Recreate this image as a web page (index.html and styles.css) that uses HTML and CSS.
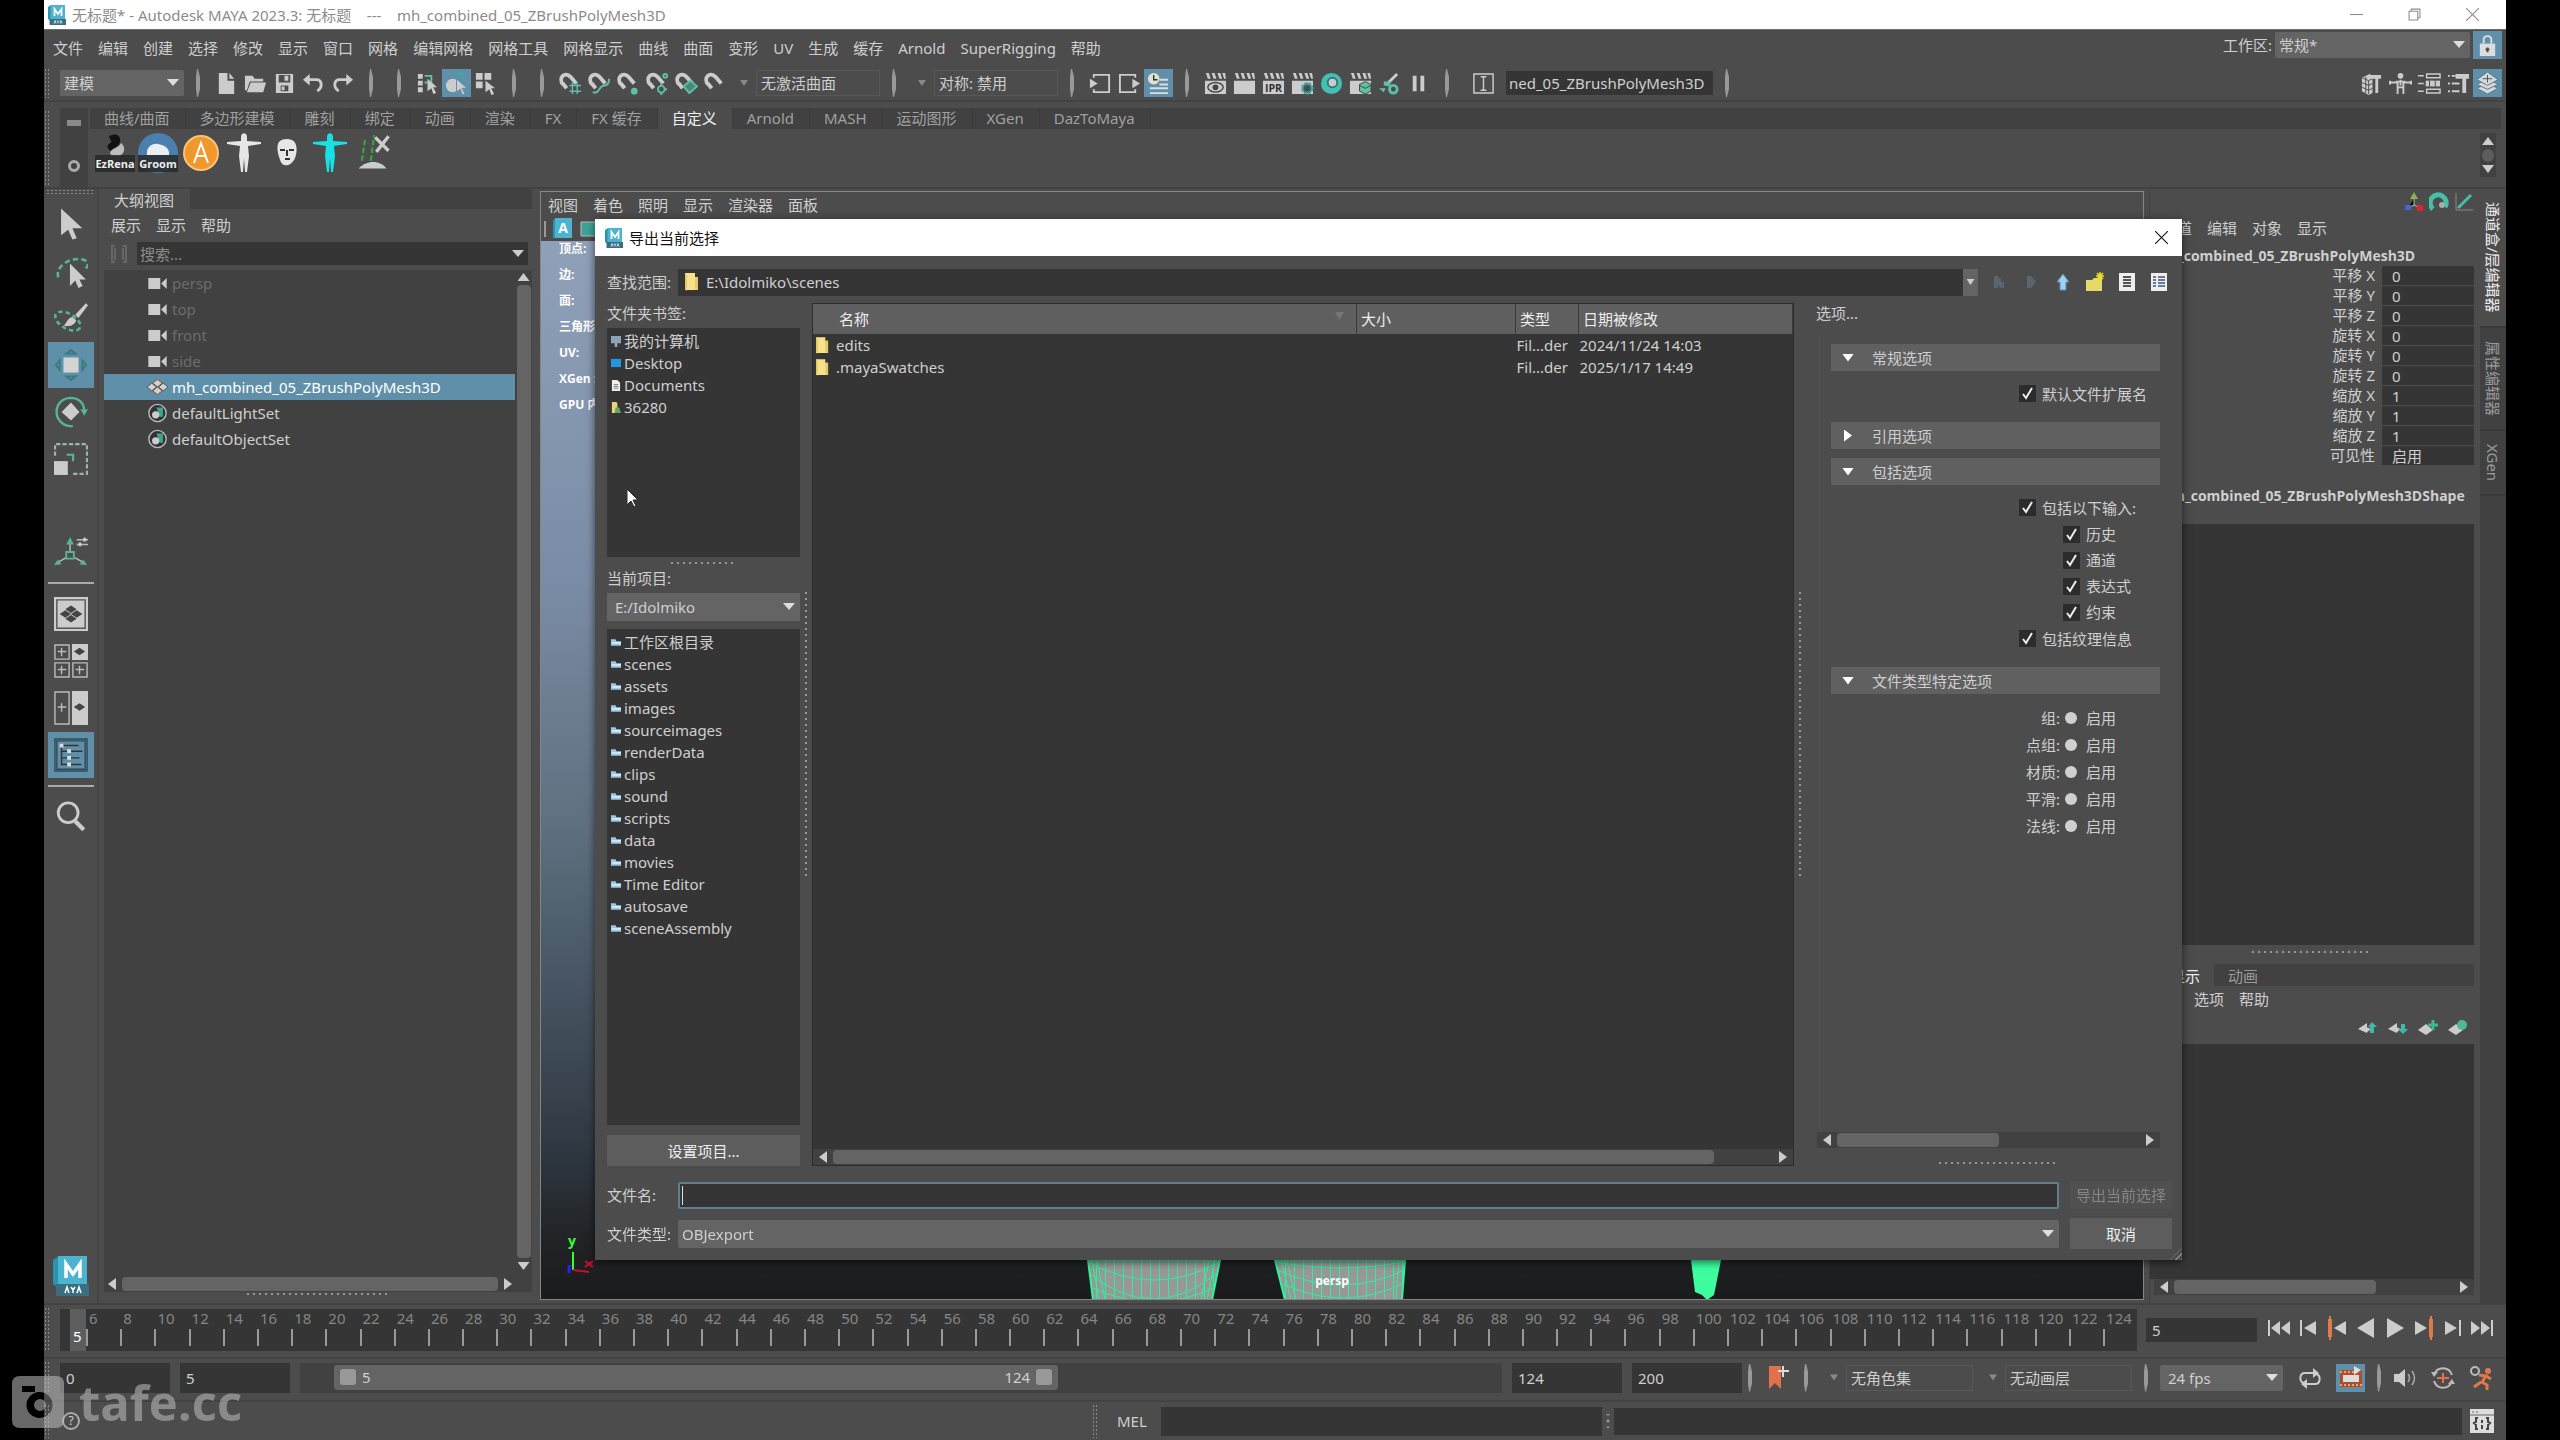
FILE: index.html
```html
<!DOCTYPE html>
<html lang="zh-CN">
<head>
  <meta charset="UTF-8" />
  <title>Autodesk MAYA 2023.3</title>
  <meta name="viewport" content="width=device-width, initial-scale=1.0" />
  <link rel="stylesheet" href="styles.css">
</head>
<body>

<!-- icon sprite -->
<svg class="sprite" xmlns="http://www.w3.org/2000/svg">
  <symbol id="i-maya" viewBox="0 0 36 40"><path fill="#2c93ad" d="M0 4 6 0v32l-6-4z"/><path fill="#4db4cf" d="M5 0h29v30H5z"/><path fill="#3a6f82" d="M3 28h33v12H3z"/><path fill="none" stroke="#fff" stroke-width="3.500" d="M13 22V8l7 10 7-10v14"/><path fill="none" stroke="#fff" stroke-width="1.500" d="m12 37 2-6 2 6M18 31l2 3 2-3M20 34v3M24 37l2-6 2 6"/></symbol>
  <symbol id="i-new" viewBox="0 0 24 24"><path fill="#ccc" d="M4 1h9v8h7v14H4z"/><path fill="#ccc" d="m15 1 5 6h-5z"/></symbol>
  <symbol id="i-open" viewBox="0 0 24 24"><path fill="#ccc" d="M1 4h8l2 3h9v3H6L3 19H1z"/><path fill="#ccc" d="M7 11h16l-3 10H3z"/></symbol>
  <symbol id="i-save" viewBox="0 0 24 24"><path fill="#ccc" fill-rule="evenodd" d="M3 2h18v20H3zM6 3v8h12V3zM8 14v6h8v-6z"/><path fill="#ccc" d="M12 4h4v5h-4zM9 15h3v4H9z"/></symbol>
  <symbol id="i-undo" viewBox="0 0 24 24"><path fill="#ccc" d="m1 8 7-6v12z"/><path d="M7 8h8c6 0 7 8 1 12" fill="none" stroke="#ccc" stroke-width="3"/></symbol>
  <symbol id="i-redo" viewBox="0 0 24 24"><path fill="#ccc" d="m23 8-7-6v12z"/><path d="M17 8H9c-6 0-7 8-1 12" fill="none" stroke="#ccc" stroke-width="3"/></symbol>
  <symbol id="i-cursor" viewBox="0 0 24 24"><path fill="#ccc" d="M5 1v19l5-4 3 7 3-1-3-7h7z"/></symbol>
  <symbol id="i-selh" viewBox="0 0 24 24"><path fill="#ccc" d="M2 2h5v5H2zM2 9h5v5H2zM2 16h5v5H2z"/><path stroke="#5fc0a5" stroke-width="2" fill="none" d="M9 4h7v8M9 11h3"/><path fill="#ccc" d="m12 7 10 9h-4l3 6-3 1-2-6-4 3z"/></symbol>
  <symbol id="i-selo" viewBox="0 0 24 24"><path fill="none" stroke="#3fa7a0" stroke-width="2" d="M10 2h9v8"/><circle cx="8" cy="14" r="7" fill="#ccc"/><path fill="#ccc" stroke="#5d8fa8" d="m12 7 11 10h-5l3 6-3 1-2-6-4 3z"/></symbol>
  <symbol id="i-selc" viewBox="0 0 24 24"><path fill="#ccc" d="M2 1h7v7H2zM11 1h7v7h-7zM2 10h7v7H2z"/><path fill="#ccc" d="m12 9 10 8h-4l3 6-3 1-2-6-4 3z"/></symbol>
  <symbol id="i-mag" viewBox="0 0 24 24"><path d="M4 13C-1 6 6-1 12 5l6 7" fill="none" stroke="#ccc" stroke-width="4"/><path d="m4 12 4 5" stroke="#ccc" stroke-width="4"/></symbol>
  <symbol id="i-mag1" viewBox="0 0 24 24"><use href="#i-mag"/><path d="M14 11v12M19 11v12M11 14h12M11 20h12" stroke="#5fc0a5" stroke-width="1.5"/></symbol>
  <symbol id="i-mag2" viewBox="0 0 24 24"><use href="#i-mag"/><path d="M5 21c7 3 6-7 12-7 4 0 5-4 5-7" fill="none" stroke="#5fc0a5" stroke-width="2"/></symbol>
  <symbol id="i-mag3" viewBox="0 0 24 24"><use href="#i-mag"/><circle cx="18" cy="20" r="3.500" fill="#5fc0a5"/></symbol>
  <symbol id="i-mag4" viewBox="0 0 24 24"><use href="#i-mag"/><g fill="none" stroke="#5fc0a5" stroke-width="2"><circle cx="16" cy="18" r="3.500"/><circle cx="20" cy="4" r="2"/><path d="M16 11v3M22 18h-2M16 22v2"/></g></symbol>
  <symbol id="i-mag5" viewBox="0 0 24 24"><use href="#i-mag"/><path fill="#4c8875" stroke="#5fc0a5" stroke-width="2" d="m16 9 7 6-8 7-6-7z"/></symbol>
  <symbol id="i-in" viewBox="0 0 24 24"><path fill="none" stroke="#ccc" stroke-width="2" d="M5 6V3h16v18H5v-3"/><path fill="#ccc" d="m1 7 8 5-8 5z"/></symbol>
  <symbol id="i-out" viewBox="0 0 24 24"><path fill="none" stroke="#ccc" stroke-width="2" d="M18 6V3H2v18h16v-3"/><path fill="#ccc" d="m15 7 8 5-8 5z"/></symbol>
  <symbol id="i-hist" viewBox="0 0 24 24"><path d="M13 8h9M13 13h9M3 17h19M3 22h19" stroke="#ddd" stroke-width="2"/><circle cx="7" cy="7" r="6" fill="#e4e0cf"/><path d="M7 3v5h4" stroke="#333" stroke-width="1.500" fill="none"/></symbol>
  <symbol id="i-clap" viewBox="0 0 24 24"><path fill="#ccc" d="M1 9h22v14H1zM2 1h3l2 6H4zM8 1h3l2 6h-3zM14 1h3l2 6h-3zM19 1h3l1 6h-2z"/></symbol>
  <symbol id="i-clap1" viewBox="0 0 24 24"><use href="#i-clap"/><ellipse cx="12" cy="16" rx="8" ry="5" fill="none" stroke="#444" stroke-width="1.500"/><circle cx="12" cy="16" r="3" fill="#444"/></symbol>
  <symbol id="i-clap2" viewBox="0 0 24 24"><use href="#i-clap"/><text x="12" y="21" text-anchor="middle" font-family="Open Sans" font-weight="700" font-size="11" fill="#333">IPR</text></symbol>
  <symbol id="i-clap3" viewBox="0 0 24 24"><use href="#i-clap"/><circle cx="17" cy="17" r="5" fill="#4c4c4c" stroke="#3aa9a4" stroke-width="3" stroke-dasharray="3 1"/></symbol>
  <symbol id="i-clap4" viewBox="0 0 24 24"><use href="#i-clap"/><path fill="#5fc0a5" stroke="#444" d="m17 10 6 3v7l-6 3-6-3v-7z"/><path stroke="#444" d="m11 14 6 3 6-3" fill="none"/></symbol>
  <symbol id="i-ball" viewBox="0 0 24 24"><circle cx="12" cy="12" r="11" fill="#45bfb2"/><circle cx="13" cy="11" r="5" fill="#ccc" stroke="#377" stroke-width="2"/></symbol>
  <symbol id="i-brushg" viewBox="0 0 24 24"><path d="m11 11 9-9" stroke="#ccc" stroke-width="3"/><path fill="#5fc0a5" d="M6 10h8l-2 5-6-1zM1 17h7l-2 4z"/><circle cx="16" cy="18" r="4" fill="none" stroke="#5fc0a5" stroke-width="3"/></symbol>
  <symbol id="i-pause" viewBox="0 0 24 24"><path fill="#ccc" d="M6 4h4v16H6zM14 4h4v16h-4z"/></symbol>
  <symbol id="i-text" viewBox="0 0 24 24"><path fill="none" stroke="#ccc" stroke-width="1.500" d="M2 2h20v20H2zM9 5h6M12 5v14M9 19h6"/></symbol>
  <symbol id="i-cube" viewBox="0 0 24 24"><path fill="#ccc" d="m2 6 8-4 3 2v18l-4 2-7-4z"/><path stroke="#4c4c4c" d="M2 11l7 3 4-2M2 16l7 3 4-2M6 5v17M9 9v14M2 6l7 3 4-2" fill="none"/><path fill="#ccc" d="M12 3h10v4h-3v15h-3V7h-4z"/></symbol>
  <symbol id="i-man" viewBox="0 0 24 24"><circle cx="12" cy="4" r="3" fill="#ccc"/><path fill="none" stroke="#ccc" stroke-width="2" d="M1 11h7v-1h8v1h7M1 9v4M23 9v4M9 10v13M15 10v13M9 16h6M12 8v6"/></symbol>
  <symbol id="i-attr" viewBox="0 0 24 24"><path fill="none" stroke="#ccc" stroke-width="1.500" d="M9 2h14v4H9zM9 18h14v4H9zM0 4h6M0 12h6M0 20h6"/><path fill="#ccc" d="M8 9h15v6H8z"/><path stroke="#444" d="M12 9v6M18 9v6"/></symbol>
  <symbol id="i-tool" viewBox="0 0 24 24"><path fill="#ccc" d="M9 2h14v5h-3v15h-4V7H9z"/><path stroke="#ccc" stroke-width="2" d="M1 4h2M5 4h4M1 12h2M5 12h8M1 20h2M5 20h8"/></symbol>
  <symbol id="i-layers" viewBox="0 0 24 24"><g fill="#d8d8d8" stroke="#55778a" stroke-width="1"><path d="m12 12 11 5-11 6-11-6z"/><path d="m12 7 11 6-11 5-11-5z"/><path d="m12 0 11 8-11 6L1 8z"/></g><path d="M12 3v8M7 7h10" stroke="#456"/></symbol>
  <symbol id="i-lock" viewBox="0 0 24 24"><path d="M8 10V6c0-5 8-5 8 0v4" fill="none" stroke="#ddd" stroke-width="2"/><path fill="#ddd" d="M4 10h16v13H4z"/><path d="M12 14v5M10 16h4" stroke="#444" stroke-width="2"/></symbol>
  <symbol id="i-lasso" viewBox="0 0 32 32"><path d="M4 22C1 11 16 3 26 5s5 8 2 11" fill="none" stroke="#55b596" stroke-width="2.500" stroke-dasharray="5 3"/><path fill="#ccc" d="M15 9v21l5-5 3 7 4-2-3-6h6z"/></symbol>
  <symbol id="i-paint" viewBox="0 0 32 32"><ellipse cx="13" cy="19" rx="13" ry="7" transform="rotate(30 13 19)" fill="none" stroke="#55b596" stroke-width="2.500" stroke-dasharray="4 3"/><path fill="#ccc" d="M9 23c3-1 3-7 8-8l4 3c-2 6-8 6-12 5zM20 13 30 2l2 2-9 12z"/></symbol>
  <symbol id="i-move" viewBox="0 0 36 36"><path fill="#d4d4d4" d="M10 10h16v16H10z"/><g fill="none" stroke="#357b82" stroke-width="2"><path d="m13 6 5-4 5 4zM13 30l5 4 5-4zM6 13l-4 5 4 5zM30 13l4 5-4 5z"/></g></symbol>
  <symbol id="i-rotate" viewBox="0 0 36 36"><path fill="none" stroke="#55b596" stroke-width="2.500" d="M17 33C-3 30-1 4 17 3c10 0 15 6 15 14M17 33h3"/><path fill="#55b596" d="M28 15h8l-4 7z"/><path fill="#ccc" d="m18 8 9 10-9 9-10-9z"/></symbol>
  <symbol id="i-scale" viewBox="0 0 32 32"><path fill="none" stroke="#9ab5ab" stroke-width="2" stroke-dasharray="4 2" d="M1 13V2h30v28H17"/><path fill="#ccc" d="M0 18h13v13H0z"/><path fill="none" stroke="#55b596" stroke-width="2" d="M12 12h6v6"/></symbol>
  <symbol id="i-manip" viewBox="0 0 36 36"><path fill="none" stroke="#bbb" d="m17 9v10M13 24 4 29M22 24l9 5M24 5h12M24 10h12" stroke-width="1.500"/><path fill="none" stroke="#55b596" stroke-width="2" d="M13 18h8v7h-8z"/><path fill="#55b596" d="m17 2 4 8h-8zM0 32l4-6 4 5zM35 32l-4-6-4 5z"/><path fill="#ccc" d="M31 3h3v4h-3zM26 8h3v4h-3z"/></symbol>
  <symbol id="i-lay1" viewBox="0 0 36 36"><path fill="#ccc" d="M0 0h36v36H0z"/><path fill="none" stroke="#555" stroke-width="1.500" d="M3 3h30v30H3z"/><path fill="#444" d="m18 9 6 4-6 4-6-4zM12 14l6 4-6 4-6-4zM24 14l6 4-6 4-6-4zM18 19l6 4-6 4-6-4z"/></symbol>
  <symbol id="i-lay4" viewBox="0 0 36 36"><path fill="#ccc" d="M19 0h17v17H19z"/><path fill="none" stroke="#bbb" stroke-width="1.500" d="M1 1h15v15H1zM1 20h15v15H1zM20 20h15v15H20zM8 4v9M4 8h9M8 23v9M4 27h9M27 23v9M23 27h9"/><path fill="#444" d="m27 4 6 4-6 4-6-4z"/></symbol>
  <symbol id="i-lay2" viewBox="0 0 36 36"><path fill="#ccc" d="M19 0h17v36H19z"/><path fill="none" stroke="#bbb" stroke-width="1.500" d="M1 1h15v34H1zM8 13v9M4 17h9"/><path fill="#444" d="m27 13 6 4-6 4-6-4z"/></symbol>
  <symbol id="i-outl" viewBox="0 0 36 36"><path fill="none" stroke="#2f4b59" stroke-width="1.500" d="M1 1h34v34H1zM3 3h30v30H3z"/><path fill="none" stroke="#333" stroke-width="1.500" d="M9 8h17M15 14h15M15 21h12M15 28h14M8 9v19h6M8 14h6M8 21h6"/><path fill="#ddd" d="M6 6h4v4H6zM14 12h4v4h-4zM14 19h4v4h-4zM14 26h4v4h-4z"/></symbol>
  <symbol id="i-find" viewBox="0 0 24 24"><circle cx="10" cy="9" r="7" fill="none" stroke="#ccc" stroke-width="2"/><path d="m15 15 6 6" stroke="#ccc" stroke-width="3"/></symbol>
  <symbol id="i-cam" viewBox="0 0 20 12"><path fill="#ccc" d="M0 0h13v12H0zM14 6l6-6v12z"/></symbol>
  <symbol id="i-mesh" viewBox="0 0 22 16"><g fill="#d8d0c8" stroke="#555"><path d="m11 0 5 4-5 4-5-4zM5 4l5 4-5 4-5-4zM17 4l5 4-5 4-5-4zM11 8l5 4-5 4-5-4z"/></g></symbol>
  <symbol id="i-set" viewBox="0 0 22 22"><circle cx="11" cy="11" r="9.500" fill="#333" stroke="#bbb" stroke-width="1.500"/><path fill="#3da58c" d="M10 5h7v10h-4z"/><circle cx="9" cy="13" r="4" fill="#ccc"/></symbol>
  <symbol id="i-folder" viewBox="0 0 14 18"><path fill="#f7e18b" d="M0 0h10v4h3v13H0z"/><path fill="#e6c965" d="M10 4h3v13l-3-1zM0 0l2 3v15l-2-2z"/></symbol>
  <symbol id="i-bfolder" viewBox="0 0 11 9"><path fill="#9cc7e2" d="M0 1h5l1 2h5v5H0z"/><path fill="#d3ebf7" d="M1 4h10v2H1z"/></symbol>
  <symbol id="i-pc" viewBox="0 0 11 12"><path fill="#8aa3b8" d="M0 0h11v8H7v4H4V8H0z"/></symbol>
  <symbol id="i-desk" viewBox="0 0 11 12"><path fill="#2494e3" d="M0 1h11v9H0z"/></symbol>
  <symbol id="i-doc" viewBox="0 0 11 12"><path fill="#eee" d="M1 0h6l3 3v9H1z"/><path stroke="#777" d="M3 5h5M3 7h5M3 9h5"/></symbol>
  <symbol id="i-user" viewBox="0 0 11 12"><path fill="#ecd07a" d="M1 0h5l1 2v10H1z"/><path fill="#5da76b" d="M5 6h4l2 6H4z"/></symbol>
  <symbol id="i-back" viewBox="0 0 20 20"><path fill="#5c656b" d="M5 4h4v12H5zM9 6h3v4h3v6h-3l-3-3z"/></symbol>
  <symbol id="i-fwd" viewBox="0 0 20 20"><path fill="#5c656b" d="M6 4h4l5 6-5 6H6z"/></symbol>
  <symbol id="i-up" viewBox="0 0 20 20"><path fill="#9fd0f2" stroke="#5d8db0" d="m10 2 6 8h-3v8H7v-8H4z"/></symbol>
  <symbol id="i-newf" viewBox="0 0 20 20"><path fill="#e6da66" d="M1 8h6l2-2h8v13H1z"/><path stroke="#e8e020" stroke-width="1.500" d="M15 0v8M11 4h8M12 1l6 6M18 1l-6 6"/></symbol>
  <symbol id="i-list" viewBox="0 0 20 20"><path fill="#eee" d="M2 1h16v18H2z"/><path stroke="#555" stroke-width="2" d="M6 5h8M6 8h8M6 11h8M6 14h8"/></symbol>
  <symbol id="i-detail" viewBox="0 0 20 20"><path fill="#eee" d="M2 1h16v18H2z"/><path stroke="#667a99" stroke-width="2" d="M4 5h3M9 5h7M4 8h3M9 8h7M4 11h3M9 11h7M4 14h3M9 14h7"/></symbol>
  <symbol id="i-tofirst" viewBox="0 0 24 24"><path fill="#ccc" d="M1 4h2v16H1zM13 5v14l-9-7zM23 5v14l-9-7z"/></symbol>
  <symbol id="i-prev" viewBox="0 0 24 24"><path fill="#ccc" d="M4 4h2v16H4zM20 5v14L8 12z"/></symbol>
  <symbol id="i-prevk" viewBox="0 0 24 24"><path fill="#e0794a" d="M3 3h4v18H3zM4 0h2v24H4z"/><path fill="#ccc" d="M21 5v14L9 12z"/></symbol>
  <symbol id="i-playb" viewBox="0 0 24 24"><path fill="#ccc" d="M20 2v20L3 12z"/></symbol>
  <symbol id="i-cut" viewBox="0 0 32 36"><path d="M3 32c7-8 20-8 25 0z" fill="#ccc"/><path d="M6 25 9 5M14 25l3-23" stroke="#3c9f48" stroke-width="2" stroke-dasharray="5 2"/><path d="m18 4 12 12M30 3 19 17" stroke="#ccc" stroke-width="3"/></symbol>
  <symbol id="i-tpose" viewBox="0 0 38 40"><path fill="currentColor" d="M16 4c0-5 6-5 6 0v4l14 1v2l-13 2 1 10-2 16h-2l-1-14-1 14h-2l-2-16 1-10-13-2V9l14-1z"/></symbol>
</svg>

<div class="app">

  <header class="titlebar">
    <svg class="logo-s"><use href="#i-maya"/></svg>
    <span class="title-text">无标题* - Autodesk MAYA 2023.3: 无标题 &nbsp;&nbsp; --- &nbsp;&nbsp; mh_combined_05_ZBrushPolyMesh3D</span>
    <div class="win-buttons">
      <button aria-label="最小化"><svg viewBox="0 0 12 12"><path d="M0 6h12"/></svg></button>
      <button aria-label="还原"><svg viewBox="0 0 12 12"><path d="M1 3h8v8H1zM3 3V1h8v8H9"/></svg></button>
      <button aria-label="关闭"><svg viewBox="0 0 12 12"><path d="m0 0 12 12M12 0 0 12"/></svg></button>
    </div>
  </header>

  <nav class="menubar">
    <a href="#">文件</a><a href="#">编辑</a><a href="#">创建</a><a href="#">选择</a><a href="#">修改</a><a href="#">显示</a><a href="#">窗口</a><a href="#">网格</a><a href="#">编辑网格</a><a href="#">网格工具</a><a href="#">网格显示</a><a href="#">曲线</a><a href="#">曲面</a><a href="#">变形</a><a href="#">UV</a><a href="#">生成</a><a href="#">缓存</a><a href="#">Arnold</a><a href="#">SuperRigging</a><a href="#">帮助</a>
    <div class="workspace">
      <label for="ws">工作区:</label>
      <select id="ws"><option>常规*</option></select>
      <button class="tb on" aria-label="锁定"><svg><use href="#i-lock"/></svg></button>
    </div>
  </nav>

  <div class="statusline">
    <i class="grip-v"></i>
    <select class="mode" aria-label="菜单集"><option>建模</option></select>
    <i class="sep"></i>
    <button class="tb"><svg><use href="#i-new"/></svg></button>
    <button class="tb"><svg><use href="#i-open"/></svg></button>
    <button class="tb"><svg><use href="#i-save"/></svg></button>
    <button class="tb"><svg><use href="#i-undo"/></svg></button>
    <button class="tb"><svg><use href="#i-redo"/></svg></button>
    <i class="sep"></i><i class="sep"></i>
    <button class="tb"><svg><use href="#i-selh"/></svg></button>
    <button class="tb on"><svg><use href="#i-selo"/></svg></button>
    <button class="tb"><svg><use href="#i-selc"/></svg></button>
    <i class="sep"></i><i class="sep"></i>
    <button class="tb"><svg><use href="#i-mag1"/></svg></button>
    <button class="tb"><svg><use href="#i-mag2"/></svg></button>
    <button class="tb"><svg><use href="#i-mag3"/></svg></button>
    <button class="tb"><svg><use href="#i-mag4"/></svg></button>
    <button class="tb"><svg><use href="#i-mag5"/></svg></button>
    <button class="tb"><svg><use href="#i-mag"/></svg></button>
    <i class="drop"></i>
    <span class="flat-field">无激活曲面</span>
    <i class="sep"></i><i class="drop"></i>
    <span class="flat-field">对称: 禁用</span>
    <i class="sep"></i>
    <button class="tb"><svg><use href="#i-in"/></svg></button>
    <button class="tb"><svg><use href="#i-out"/></svg></button>
    <button class="tb on"><svg><use href="#i-hist"/></svg></button>
    <i class="sep"></i>
    <button class="tb"><svg><use href="#i-clap1"/></svg></button>
    <button class="tb"><svg><use href="#i-clap"/></svg></button>
    <button class="tb"><svg><use href="#i-clap2"/></svg></button>
    <button class="tb"><svg><use href="#i-clap3"/></svg></button>
    <button class="tb"><svg><use href="#i-ball"/></svg></button>
    <button class="tb"><svg><use href="#i-clap4"/></svg></button>
    <button class="tb"><svg><use href="#i-brushg"/></svg></button>
    <button class="tb"><svg><use href="#i-pause"/></svg></button>
    <i class="sep"></i>
    <button class="tb wide"><svg><use href="#i-text"/></svg></button>
    <input class="name-field" aria-label="名称" value="ned_05_ZBrushPolyMesh3D">
    <i class="sep"></i>
    <div class="status-right">
      <button class="tb"><svg><use href="#i-cube"/></svg></button>
      <button class="tb"><svg><use href="#i-man"/></svg></button>
      <button class="tb"><svg><use href="#i-attr"/></svg></button>
      <button class="tb"><svg><use href="#i-tool"/></svg></button>
      <button class="tb on"><svg><use href="#i-layers"/></svg></button>
    </div>
  </div>

  <section class="shelf">
    <i class="grip-v"></i>
    <div class="shelf-side"><i class="shelf-menu"></i><i class="gear"></i></div>
    <div class="shelf-main">
      <div class="shelf-tabs">
        <a href="#">曲线/曲面</a><a href="#">多边形建模</a><a href="#">雕刻</a><a href="#">绑定</a><a href="#">动画</a><a href="#">渲染</a><a href="#">FX</a><a href="#">FX 缓存</a><a href="#" class="active">自定义</a><a href="#">Arnold</a><a href="#">MASH</a><a href="#">运动图形</a><a href="#">XGen</a><a href="#">DazToMaya</a>
      </div>
      <div class="shelf-body">
        <button class="shelf-btn"><svg viewBox="0 0 40 40"><path d="M14 3c8-4 12 0 11 6-1 5-7 5-9 9-4-2-5-5-1-8 3-1 0-3-1-7z" fill="#111"/><path d="M15 20c1-5 8-4 11-10 6 5 3 13-4 13-3 0-6 0-7-3z" fill="#bbb"/></svg><span>EzRena</span></button>
        <button class="shelf-btn"><svg viewBox="0 0 40 40"><circle cx="20" cy="20" r="20" fill="#4b7fae"/><path d="M9 22c-1-8 5-12 11-11s12 4 11 11z" fill="#e8eef2"/></svg><span>Groom</span></button>
        <button class="shelf-btn"><svg viewBox="0 0 40 40"><circle cx="20" cy="20" r="17" fill="#f0982c" stroke="#f8c37c" stroke-width="2"/><path d="m13 30 7-20 7 20M16 23h8" fill="none" stroke="#fff" stroke-width="2"/></svg></button>
        <button class="shelf-btn white"><svg><use href="#i-tpose"/></svg></button>
        <button class="shelf-btn"><svg viewBox="0 0 40 40"><path d="M20 6c13 0 10 16 7 21s-11 9-14 0S7 6 20 6z" fill="#e6e6e6"/><path d="M13 17h5M22 17h5M18 26h5M20 17v6" stroke="#333" stroke-width="2"/></svg></button>
        <button class="shelf-btn cyan"><svg><use href="#i-tpose"/></svg></button>
        <button class="shelf-btn"><svg><use href="#i-cut"/></svg></button>
        <div class="shelf-scroll"><i class="tri up"></i><i class="knob"></i><i class="tri down"></i></div>
      </div>
    </div>
  </section>

  <main class="work">

    <aside class="toolbox">
      <i class="grip-h"></i>
      <button><svg><use href="#i-cursor"/></svg></button>
      <button><svg><use href="#i-lasso"/></svg></button>
      <button><svg><use href="#i-paint"/></svg></button>
      <button class="on"><svg><use href="#i-move"/></svg></button>
      <button><svg><use href="#i-rotate"/></svg></button>
      <button><svg><use href="#i-scale"/></svg></button>
      <button class="after-gap"><svg><use href="#i-manip"/></svg></button>
      <hr>
      <button><svg><use href="#i-lay1"/></svg></button>
      <button><svg><use href="#i-lay4"/></svg></button>
      <button><svg><use href="#i-lay2"/></svg></button>
      <button class="on"><svg><use href="#i-outl"/></svg></button>
      <hr>
      <button><svg><use href="#i-find"/></svg></button>
      <svg class="logo-l"><use href="#i-maya"/></svg>
    </aside>

    <section class="outliner">
      <div class="panel-tabs"><a href="#">大纲视图</a></div>
      <nav class="panel-menu"><a href="#">展示</a><a href="#">显示</a><a href="#">帮助</a></nav>
      <div class="search">
        <svg viewBox="0 0 18 18"><path d="M5 1H2v16h3M13 1h3v16h-3M5 3v12M13 3v12" fill="none" stroke="#666" stroke-width="2"/></svg>
        <input type="text" placeholder="搜索..." aria-label="搜索">
      </div>
      <div class="tree-wrap">
        <ul class="tree">
          <li class="dim"><svg><use href="#i-cam"/></svg>persp</li>
          <li class="dim"><svg><use href="#i-cam"/></svg>top</li>
          <li class="dim"><svg><use href="#i-cam"/></svg>front</li>
          <li class="dim"><svg><use href="#i-cam"/></svg>side</li>
          <li class="selected"><svg><use href="#i-mesh"/></svg>mh_combined_05_ZBrushPolyMesh3D</li>
          <li><svg><use href="#i-set"/></svg>defaultLightSet</li>
          <li><svg><use href="#i-set"/></svg>defaultObjectSet</li>
        </ul>
        <div class="vscroll"><i class="tri up"></i><i class="thumb"></i><i class="tri down"></i></div>
      </div>
      <div class="hscroll out-scroll"><i class="tri left"></i><i class="thumb"></i><i class="tri right"></i></div>
      <i class="dots out-dots"></i>
    </section>

    <section class="viewport">
      <nav class="panel-menu"><a href="#">视图</a><a href="#">着色</a><a href="#">照明</a><a href="#">显示</a><a href="#">渲染器</a><a href="#">面板</a></nav>
      <div class="view-tools">
        <svg viewBox="0 0 60 24"><path fill="#999" d="M3 4h2v16H3z"/><path fill="#2c93ad" d="M12 3l4-2v20h-4z"/><path fill="#4db4cf" d="M14 1h17v20H14z"/><text x="22" y="16" text-anchor="middle" font-family="Open Sans" font-weight="700" font-size="14" fill="#fff">A</text><path fill="#3ba395" stroke="#bbb" d="M40 5h16v14H40z"/></svg>
      </div>
      <div class="scene">
        <ul class="hud"><li>顶点:</li><li>边:</li><li>面:</li><li>三角形:</li><li>UV:</li><li>XGen :</li><li>GPU 内存</li></ul>
        <svg class="axis" viewBox="0 0 40 44"><text x="7" y="11" font-family="Open Sans" font-weight="700" font-size="14" fill="#3f3">y</text><path d="M12 17v18" stroke="#3f3" stroke-width="2"/><path d="m12 35 16 2M24 26l8 6M32 26l-8 6" stroke="#c8102e" stroke-width="2"/><path d="M8 30v8" stroke="#22f" stroke-width="3"/></svg>
        <svg class="model" viewBox="0 0 640 39">
          <defs>
            <pattern id="wire" width="9" height="13" patternUnits="userSpaceOnUse"><path d="M0 0v13" fill="none" stroke="#2ff09a" stroke-width="2"/></pattern>
          </defs>
          <g stroke="#2ff59c" stroke-width="2"><path fill="#989898" d="M1 0h132l-8 40H6z"/><path fill="#989898" d="M188 0h130l-3 40H198z"/></g>
          <path fill="url(#wire)" d="M1 0h132l-8 40H6zM188 0h130l-3 40H198z"/>
          <g fill="none" stroke="#2ff09a"><path d="M1 2q66 36 132 0M3 14q64 50 126 0M6 28q60 28 120 0M188 2q66 12 130 0M190 10q66 30 127 0M196 24q60 28 119 0M5 0l7 40M10 0l8 40M128 0l-8 40M122 0l-8 40M194 0l10 40M200 0l9 40M312 0l-3 40"/></g>
          <path fill="#3dfd9f" d="M604 0h30l-7 35-7 5-5-5-7-3z"/>
          <text x="245" y="25" text-anchor="middle" font-family="Open Sans" font-weight="700" font-size="12" fill="#fff">persp</text>
        </svg>
      </div>
    </section>

    <aside class="channel">
      <div class="channel-icons">
        <svg viewBox="0 0 20 20"><path fill="#8ab648" d="m10 0 4 7H6z"/><path stroke="#bbb" d="M10 7v6l-6 3M10 13l6 3"/><path fill="#d23" d="M13 13h6v6h-6z"/><path fill="#46c" d="M1 13h6v5H1z"/></svg>
        <svg viewBox="0 0 20 20"><path d="M4 17A8 8 0 1 1 16 15" fill="none" stroke="#45bfa8" stroke-width="5"/><circle cx="13" cy="13" r="3" fill="#aaa"/></svg>
        <svg viewBox="0 0 20 20"><path d="M2 1v17h17" fill="none" stroke="#888"/><path d="M4 16 17 3" stroke="#45bfa8" stroke-width="3"/></svg>
      </div>
      <nav class="panel-menu"><a href="#">通道</a><a href="#">编辑</a><a href="#">对象</a><a href="#">显示</a></nav>
      <h2>mh_combined_05_ZBrushPolyMesh3D</h2>
      <div class="attrs">
        <label for="tx">平移 X</label><input id="tx" value="0">
        <label for="ty">平移 Y</label><input id="ty" value="0">
        <label for="tz">平移 Z</label><input id="tz" value="0">
        <label for="rx">旋转 X</label><input id="rx" value="0">
        <label for="ry">旋转 Y</label><input id="ry" value="0">
        <label for="rz">旋转 Z</label><input id="rz" value="0">
        <label for="sx">缩放 X</label><input id="sx" value="1">
        <label for="sy">缩放 Y</label><input id="sy" value="1">
        <label for="sz">缩放 Z</label><input id="sz" value="1">
        <label for="vis">可见性</label><input id="vis" value="启用">
      </div>
      <h2 class="shape">mh_combined_05_ZBrushPolyMesh3DShape</h2>
      <div class="dark-pane"></div>
      <i class="dots"></i>
      <div class="layer-tabs"><a href="#" class="active">显示</a><a href="#">动画</a></div>
      <nav class="panel-menu layer-menu"><a href="#">层</a><a href="#">选项</a><a href="#">帮助</a></nav>
      <div class="layer-icons">
        <svg viewBox="0 0 20 16"><path fill="#ccc" d="m0 9 9-6v10zM8 7l5 2-5 4z"/><path fill="#3fb8a8" d="m14 2 5 5h-3v6h-4V7h-2z"/></svg>
        <svg viewBox="0 0 20 16"><path fill="#ccc" d="m0 9 9-6v10zM8 7l5 2-5 4z"/><path fill="#3fb8a8" d="m15 14-5-5h3V4h4v5h3z"/></svg>
        <svg viewBox="0 0 20 16"><path fill="#ccc" d="m0 10 8-6 7 6-7 5z"/><path stroke="#3fb89a" stroke-width="3" d="M15 0v10M10 5h10"/></svg>
        <svg viewBox="0 0 20 16"><path fill="#ccc" d="m0 10 8-6 7 6-7 5z"/><circle cx="14" cy="5" r="5" fill="#4fb898"/></svg>
      </div>
      <div class="dark-pane grow"></div>
      <div class="hscroll"><i class="tri left"></i><i class="thumb part"></i><i class="tri right"></i></div>
    </aside>

    <nav class="side-tabs"><a href="#" class="active">通道盒/层编辑器</a><a href="#">属性编辑器</a><a href="#">XGen</a></nav>
  </main>

  <section class="timeline">
    <i class="grip-v"></i>
    <div class="track"><span class="current">5</span><div class="ticks" id="ticks"></div></div>
    <input class="time-field" aria-label="当前时间" value="5">
    <div class="play">
      <button><svg><use href="#i-tofirst"/></svg></button>
      <button><svg><use href="#i-prev"/></svg></button>
      <button><svg><use href="#i-prevk"/></svg></button>
      <button><svg><use href="#i-playb"/></svg></button>
      <button class="flip"><svg><use href="#i-playb"/></svg></button>
      <button class="flip"><svg><use href="#i-prevk"/></svg></button>
      <button class="flip"><svg><use href="#i-prev"/></svg></button>
      <button class="flip"><svg><use href="#i-tofirst"/></svg></button>
    </div>
  </section>

  <section class="range">
    <i class="grip-v"></i>
    <input class="num" aria-label="动画开始" value="0">
    <input class="num" aria-label="播放开始" value="5">
    <div class="range-track"><div class="range-bar"><i></i><span>5</span><span class="end">124</span><i></i></div></div>
    <input class="num" aria-label="播放结束" value="124">
    <input class="num" aria-label="动画结束" value="200">
    <div class="range-tools">
      <i class="sep thin"></i>
      <svg class="bm" viewBox="0 0 24 26"><path fill="#e0714a" d="M3 1h12v23l-6-6-6 6z"/><path stroke="#ddd" stroke-width="2" d="M17 1v11M12 6h11"/></svg>
      <i class="sep thin"></i><i class="drop"></i><span class="flat-field">无角色集</span>
      <i class="drop"></i><span class="flat-field">无动画层</span>
      <i class="sep"></i>
      <select class="fps" aria-label="帧速率"><option>24 fps</option></select>
    </div>
    <div class="range-icons">
      <svg viewBox="0 0 24 24"><path d="M17 7H7c-6 0-6 9-1 10M7 18h10c6 0 6-9 1-10" fill="none" stroke="#ccc" stroke-width="2"/><path fill="#ccc" d="m15 2 6 5-6 5zM9 13l-6 5 6 5z"/></svg>
      <span class="tb on"><svg viewBox="0 0 24 24"><path fill="#a9512f" d="M1 4h22v17H1z"/><path fill="#ddd" d="M4 9h16v7H4z"/><path d="M1 6h20M1 19h22" stroke="#f0a070" stroke-width="2" stroke-dasharray="2 2"/><path fill="#ddd" d="m15 0 7 4-7 5z"/></svg></span>
      <i class="sep thin"></i>
      <svg viewBox="0 0 24 24"><path fill="#ccc" d="M1 8h5l6-5v18l-6-5H1z"/><path d="M15 8q3 4 0 8M19 5q5 7 0 14" fill="none" stroke="#aaa" stroke-width="1.500"/></svg>
      <svg viewBox="0 0 24 24"><path d="M3 9C6 0 18 0 21 9M21 15c-3 9-15 9-18 0" fill="none" stroke="#bbb" stroke-width="2"/><path fill="#bbb" d="M0 6h7l-4 5zM24 18h-7l4-5z"/><path d="M6 12h12M12 7v10" stroke="#e0714a" stroke-width="2"/></svg>
      <svg viewBox="0 0 24 24"><circle cx="6" cy="5" r="4" fill="none" stroke="#bbb" stroke-width="2"/><circle cx="19" cy="5" r="3" fill="#e0794a"/><path d="m10 9 7 1-4 6 5 3v5M12 16l-7 5M17 10l5 3" fill="none" stroke="#e0794a" stroke-width="3"/></svg>
    </div>
  </section>

  <section class="command">
    <div class="help-line"><i class="grip-v"></i><span class="help-mark">?</span></div>
    <i class="grip-v"></i>
    <label for="mel">MEL</label>
    <input id="mel" type="text">
    <i class="colon"></i>
    <output class="result"></output>
    <button aria-label="脚本编辑器"><svg viewBox="0 0 24 24"><path fill="#ddd" d="M0 0h24v24H0z"/><path stroke="#666" stroke-dasharray="2 2" d="M2 3h8"/><path stroke="#666" d="M0 6h24"/><path d="M8 9H6v4l-2 1 2 2v4h2M16 9h2v4l2 1-2 2v4h-2M12 11v3M12 16v4" fill="none" stroke="#444" stroke-width="2"/></svg></button>
  </section>

  <!-- export dialog -->
  <div class="dialog" role="dialog" aria-labelledby="dlgTitle">
    <header class="dlg-title">
      <svg class="logo-s"><use href="#i-maya"/></svg>
      <span id="dlgTitle">导出当前选择</span>
      <button aria-label="关闭"><svg viewBox="0 0 12 12"><path d="m0 0 12 12M12 0 0 12"/></svg></button>
    </header>
    <div class="dlg-body">
      <div class="look-row">
        <span class="lbl">查找范围:</span>
        <div class="path"><svg><use href="#i-folder"/></svg><span>E:\Idolmiko\scenes</span><button aria-label="展开"><i class="tri down"></i></button></div>
        <div class="nav-icons">
          <svg><use href="#i-back"/></svg><svg><use href="#i-fwd"/></svg><svg><use href="#i-up"/></svg><svg><use href="#i-newf"/></svg><svg><use href="#i-list"/></svg><svg><use href="#i-detail"/></svg>
        </div>
      </div>
      <div class="dlg-main">
        <div class="places">
          <span class="lbl">文件夹书签:</span>
          <ul class="plist marks">
            <li><svg><use href="#i-pc"/></svg>我的计算机</li>
            <li><svg><use href="#i-desk"/></svg>Desktop</li>
            <li><svg><use href="#i-doc"/></svg>Documents</li>
            <li><svg><use href="#i-user"/></svg>36280</li>
          </ul>
          <i class="dots"></i>
          <label class="lbl" for="proj">当前项目:</label>
          <select id="proj"><option>E:/Idolmiko</option></select>
          <ul class="plist dirs">
            <li><svg><use href="#i-bfolder"/></svg>工作区根目录</li>
            <li><svg><use href="#i-bfolder"/></svg>scenes</li>
            <li><svg><use href="#i-bfolder"/></svg>assets</li>
            <li><svg><use href="#i-bfolder"/></svg>images</li>
            <li><svg><use href="#i-bfolder"/></svg>sourceimages</li>
            <li><svg><use href="#i-bfolder"/></svg>renderData</li>
            <li><svg><use href="#i-bfolder"/></svg>clips</li>
            <li><svg><use href="#i-bfolder"/></svg>sound</li>
            <li><svg><use href="#i-bfolder"/></svg>scripts</li>
            <li><svg><use href="#i-bfolder"/></svg>data</li>
            <li><svg><use href="#i-bfolder"/></svg>movies</li>
            <li><svg><use href="#i-bfolder"/></svg>Time Editor</li>
            <li><svg><use href="#i-bfolder"/></svg>autosave</li>
            <li><svg><use href="#i-bfolder"/></svg>sceneAssembly</li>
          </ul>
          <button class="btn">设置项目...</button>
        </div>
        <i class="vdots"></i>
        <div class="files">
          <table>
            <colgroup><col><col class="c-size"><col class="c-type"><col class="c-date"></colgroup>
            <thead><tr><th class="first">名称<i class="sort"></i></th><th>大小</th><th>类型</th><th>日期被修改</th></tr></thead>
            <tbody>
              <tr><td class="first"><svg><use href="#i-folder"/></svg>edits</td><td></td><td>Fil...der</td><td>2024/11/24 14:03</td></tr>
              <tr><td class="first"><svg><use href="#i-folder"/></svg>.mayaSwatches</td><td></td><td>Fil...der</td><td>2025/1/17 14:49</td></tr>
            </tbody>
          </table>
          <div class="hscroll"><i class="tri left"></i><i class="thumb"></i><i class="tri right"></i></div>
        </div>
        <i class="vdots"></i>
        <div class="options">
          <span class="lbl">选项...</span>
          <div class="opt-box">
            <button class="section"><i class="tri down"></i>常规选项</button>
            <div class="opt-group"><label class="chk"><input type="checkbox" checked>默认文件扩展名</label></div>
            <button class="section"><i class="tri right"></i>引用选项</button>
            <button class="section"><i class="tri down"></i>包括选项</button>
            <div class="opt-group">
              <label class="chk"><input type="checkbox" checked>包括以下输入:</label>
              <label class="chk sub"><input type="checkbox" checked>历史</label>
              <label class="chk sub"><input type="checkbox" checked>通道</label>
              <label class="chk sub"><input type="checkbox" checked>表达式</label>
              <label class="chk sub"><input type="checkbox" checked>约束</label>
              <label class="chk"><input type="checkbox" checked>包括纹理信息</label>
            </div>
            <button class="section"><i class="tri down"></i>文件类型特定选项</button>
            <div class="opt-group radios">
              <span>组:</span><label><input type="radio" name="g">启用</label>
              <span>点组:</span><label><input type="radio" name="pg">启用</label>
              <span>材质:</span><label><input type="radio" name="mt">启用</label>
              <span>平滑:</span><label><input type="radio" name="sm">启用</label>
              <span>法线:</span><label><input type="radio" name="nm">启用</label>
            </div>
            <div class="hscroll"><i class="tri left"></i><i class="thumb"></i><i class="tri right"></i></div>
          </div>
          <i class="dots"></i>
        </div>
      </div>
      <div class="dlg-form">
        <label class="lbl" for="fname">文件名:</label>
        <input id="fname" type="text">
        <button class="btn short" disabled>导出当前选择</button>
        <label class="lbl" for="ftype">文件类型:</label>
        <select id="ftype"><option>OBJexport</option></select>
        <button class="btn">取消</button>
      </div>
    </div>
    <i class="resize"></i>
  </div>
</div>

<svg class="pointer" viewBox="0 0 12 18"><path d="M0 0v16l4-4 3 6 2-1-3-6h5z" fill="#fff" stroke="#222" stroke-width="1"/></svg>

<div class="watermark">
  <svg viewBox="0 0 52 52"><path fill="currentColor" fill-rule="evenodd" d="M8 0h36q8 0 8 8v36q0 8-8 8H8q-8 0-8-8V8q0-8 8-8zM10 10v6h13v-6zM27 16a13 13 0 1 0 1 26 13 13 0 0 0-1-26zM28 23a6 6 0 1 1 0 12 6 6 0 0 1 0-12z"/></svg>
  <span>tafe.cc</span>
</div>

<script>
  // frame numbers, every second frame
  const ticks = document.getElementById("ticks");
  for (let f = 6; f <= 124; f += 2) {
    const s = document.createElement("span");
    s.textContent = f;
    ticks.appendChild(s);
  }
  document.getElementById("fname").focus();
</script>
</body>
</html>
```

FILE: styles.css
```css
:root {
  --bg: #4c4c4c;
  --mid: #414141;
  --dark: #353535;
  --btn: #646464;
  --blue: #6090a9;
  --text: #cfcfcf;
  --font: "Noto Sans", "Noto Sans CJK SC", sans-serif;
  --bold-font: "Open Sans", "Noto Sans CJK SC", sans-serif;
}
* {
  box-sizing: border-box;
}
body {
  margin: 0;
  background: #000;
  color: var(--text);
  font: 15px/20px var(--font);
  height: 100vh;
  overflow: hidden;
}
a {
  color: inherit;
  text-decoration: none;
  white-space: nowrap;
}
ul {
  list-style: none;
  margin: 0;
  padding: 0;
}
button, input, select {
  font: inherit;
  color: inherit;
  border: 0;
  padding: 0;
  margin: 0;
  border-radius: 0;
  background: none;
  outline: none;
}
svg {
  display: block;
  flex: none;
}
.sprite {
  position: absolute;
  width: 0;
  height: 0;
}
select {
  appearance: none;
  padding: 0 8px;
  border-radius: 2px;
  background: var(--btn) url("data:image/svg+xml,%3Csvg xmlns='http://www.w3.org/2000/svg' width='14' height='8'%3E%3Cpath fill='%23ddd' d='M1 0h12L7 7z'/%3E%3C/svg%3E") no-repeat right 4px center;
}
.app {
  position: relative;
  height: 100vh;
  margin: 0 54px 0 44px;
  background: var(--bg);
  display: flex;
  flex-direction: column;
}

/* shared bits */
.tri {
  width: 12px;
  height: 8px;
  background: #ccc;
  flex: none;
}
.tri.down { clip-path: polygon(0 0, 100% 0, 50% 100%); }
.tri.up { clip-path: polygon(50% 0, 100% 100%, 0 100%); }
.tri.left { width: 8px; height: 12px; clip-path: polygon(100% 0, 100% 100%, 0 50%); }
.tri.right { width: 8px; height: 12px; clip-path: polygon(0 0, 100% 50%, 0 100%); }
.hscroll {
  display: flex;
  align-items: center;
  gap: 6px;
  padding: 0 6px;
  height: 16px;
  background: var(--mid);
  flex: none;
}
.hscroll .thumb {
  height: 14px;
  border-radius: 4px;
  background: var(--btn);
  flex: 1;
}
.hscroll .tri.right {
  margin-left: auto;
}
.dots {
  height: 2px;
  width: 120px;
  align-self: center;
  flex: none;
  background: repeating-linear-gradient(90deg, #999 0 2px, transparent 2px 6px);
}
.grip-v {
  width: 6px;
  flex: none;
  align-self: stretch;
  margin: 2px 10px 2px 0;
  background: radial-gradient(circle, #8a8a8a 1px, transparent 1px) 0 0 / 3px 4px;
}
.grip-h {
  height: 6px;
  flex: none;
  align-self: stretch;
  margin: 0 2px;
  background: radial-gradient(circle, #8a8a8a 1px, transparent 1px) 0 0 / 4px 3px;
}
.sep {
  width: 28px;
  height: 28px;
  flex: none;
  background: #999;
  clip-path: polygon(13px 0, 14px 0, 16px 8px, 16px 20px, 14px 28px, 13px 28px, 12px 20px, 12px 8px);
}
.drop {
  width: 26px;
  height: 28px;
  flex: none;
  background: #888;
  clip-path: polygon(10px 11px, 18px 11px, 14px 17px);
}
.flat-field {
  height: 26px;
  width: 124px;
  padding: 2px 4px;
  border: 1px solid #575757;
  flex: none;
}
.tb {
  width: 29px;
  height: 28px;
  display: flex;
  align-items: center;
  justify-content: center;
  flex: none;
}
.tb svg {
  width: 23px;
  height: 23px;
}
.on {
  background: var(--blue);
}

/* title, menus */
.titlebar {
  height: 29px;
  background: #fff;
  color: #8c8c8c;
  display: flex;
  align-items: center;
  gap: 6px;
  padding-left: 4px;
  flex: none;
}
.logo-s {
  width: 18px;
  height: 20px;
}
.win-buttons {
  margin-left: auto;
  display: flex;
}
.win-buttons button {
  width: 58px;
  height: 28px;
  padding-left: 18px;
}
.win-buttons svg, .dlg-title button svg {
  width: 13px;
  height: 13px;
  fill: none;
  stroke: currentColor;
}
.menubar {
  height: 37px;
  display: flex;
  align-items: center;
  gap: 15px;
  padding: 0 4px 0 9px;
  border-top: 1px solid #6a6f6d;
  flex: none;
}
.workspace {
  margin-left: auto;
  align-self: flex-start;
  display: flex;
  align-items: center;
  gap: 3px;
  padding-top: 1px;
}
.workspace select {
  width: 195px;
  height: 26px;
  padding: 0 4px;
}
.statusline {
  height: 34px;
  display: flex;
  align-items: center;
  flex: none;
  padding-right: 4px;
}
.mode {
  width: 124px;
  height: 26px;
  padding: 0 4px;
}
.tb.wide {
  width: 45px;
}
.name-field {
  width: 207px;
  height: 24px;
  padding: 0 3px;
  background: var(--dark);
  flex: none;
}
.status-right {
  margin-left: auto;
  display: flex;
}

/* shelf */
.shelf {
  height: 87px;
  padding-top: 6px;
  border-top: 2px solid #434343;
  display: flex;
  flex: none;
}
.shelf-side {
  width: 28px;
  background: var(--mid);
  display: flex;
  flex-direction: column;
  align-items: center;
  justify-content: space-between;
  padding: 12px 0 15px;
  margin-right: 2px;
}
.shelf-menu {
  width: 14px;
  height: 6px;
  background: #8a8a8a;
}
.gear {
  width: 12px;
  height: 12px;
  border: 3px solid #aaa;
  border-radius: 50%;
}
.shelf-main {
  flex: 1;
  display: flex;
  flex-direction: column;
}
.shelf-tabs {
  height: 21px;
  background: var(--mid);
  color: #a0a0a0;
  display: flex;
  margin-right: 5px;
}
.shelf-tabs a {
  padding: 0 15px 0 14px;
  border-right: 1px solid #3a3a3a;
}
.shelf-tabs .active {
  background: var(--bg);
  color: #f0f0f0;
}
.shelf-body {
  flex: 1;
  display: flex;
  align-items: flex-start;
  padding: 4px 10px 0 5px;
}
.shelf-btn {
  width: 43px;
  height: 40px;
  position: relative;
  overflow: hidden;
}
.shelf-btn svg {
  width: 40px;
  height: 40px;
}
.shelf-btn span {
  position: absolute;
  left: 0;
  bottom: 1px;
  width: 40px;
  overflow: hidden;
  background: rgba(40, 40, 40, 0.85);
  color: #eee;
  font: bold 11px/17px var(--bold-font);
}
.white { color: #e6e6e6; }
.cyan { color: #19e0e4; }
.shelf-scroll {
  margin-left: auto;
  width: 16px;
  height: 44px;
  background: var(--mid);
  display: flex;
  flex-direction: column;
  align-items: center;
  justify-content: space-between;
  padding: 4px 0;
}
.knob {
  width: 12px;
  height: 13px;
  border-radius: 50%;
  background: #5d5d5d;
}

/* work area */
.work {
  flex: 1;
  min-height: 0;
  display: flex;
  border-top: 2px solid #414141;
}
.toolbox {
  width: 55px;
  margin-right: 5px;
  display: flex;
  flex-direction: column;
  align-items: center;
  border-right: 2px solid #444;
}
.toolbox button {
  width: 46px;
  height: 46px;
  margin-bottom: 1px;
  display: flex;
  align-items: center;
  justify-content: center;
  flex: none;
}
.toolbox .grip-h {
  margin-bottom: 6px;
}
.toolbox svg {
  width: 34px;
  height: 34px;
}
.toolbox .after-gap {
  margin-top: 46px;
}
.toolbox hr {
  width: 46px;
  height: 2px;
  border: 0;
  margin: 6px 0 7px;
  background: #aaa;
  flex: none;
}
.toolbox .logo-l {
  width: 36px;
  height: 40px;
  margin: auto 0 7px;
}
.outliner {
  width: 428px;
  margin-right: 8px;
  display: flex;
  flex-direction: column;
}
.panel-tabs {
  height: 20px;
  background: var(--mid);
  display: flex;
}
.panel-tabs a {
  background: var(--bg);
  padding: 1px 16px 0 10px;
}
.panel-menu {
  display: flex;
  gap: 15px;
  padding-left: 7px;
}
.outliner .panel-menu {
  height: 32px;
  align-items: center;
}
.search {
  display: flex;
  align-items: center;
  gap: 9px;
  height: 23px;
  margin: 1px 0 5px;
  padding: 0 4px 0 6px;
}
.search svg {
  width: 18px;
  height: 18px;
}
.search input {
  flex: 1;
  height: 23px;
  padding: 0 3px;
  background: var(--dark) url("data:image/svg+xml,%3Csvg xmlns='http://www.w3.org/2000/svg' width='14' height='8'%3E%3Cpath fill='%23ccc' d='M1 0h12L7 7z'/%3E%3C/svg%3E") no-repeat right 3px center;
}
.search input::placeholder {
  color: #8c8c8c;
}
.tree-wrap {
  flex: 1;
  display: flex;
  background: var(--mid);
}
.tree {
  flex: 1;
}
.tree li {
  height: 26px;
  display: flex;
  align-items: center;
  gap: 4px;
  padding-left: 43px;
}
.tree svg {
  width: 21px;
  height: 20px;
}
.tree .dim svg {
  height: 11px;
}
.dim {
  color: #6c6c6c;
}
.selected {
  background: var(--blue);
  color: #fff;
}
.vscroll {
  width: 17px;
  display: flex;
  flex-direction: column;
  align-items: center;
  gap: 4px;
  padding: 3px 0 6px;
}
.vscroll .thumb {
  flex: 1;
  width: 14px;
  border-radius: 4px;
  background: var(--btn);
}
.out-scroll {
  padding: 0 20px 0 4px;
}
.out-dots {
  width: 142px;
  margin: 1px 0 8px;
}
.viewport {
  flex: 1;
  min-width: 0;
  margin: 2px 5px 3px 0;
  border: 1px solid #858585;
  display: flex;
  flex-direction: column;
}
.viewport .panel-menu {
  height: 25px;
  align-items: center;
}
.view-tools {
  height: 24px;
  flex: none;
}
.view-tools svg {
  width: 60px;
  height: 24px;
}
.scene {
  flex: 1;
  position: relative;
  background: linear-gradient(#8fa0b8, #7b8ca6 32%, #5f7080 55%, #303a44 85%, #202224 95%, #1a1b1c);
}
.hud {
  padding-left: 18px;
  color: #fff;
  font: bold 12px/26px var(--bold-font);
  margin-top: -5px;
}
.axis {
  position: absolute;
  left: 20px;
  bottom: 20px;
  width: 40px;
  height: 44px;
}
.model {
  position: absolute;
  left: 546px;
  bottom: 0;
  width: 640px;
  height: 39px;
}

/* channel box */
.channel {
  width: 331px;
  padding-right: 6px;
  display: flex;
  flex-direction: column;
  border-left: 1px solid #424242;
}
.channel-icons {
  display: flex;
  justify-content: flex-end;
  gap: 5px;
  padding: 3px 0 4px;
}
.channel-icons svg {
  width: 20px;
  height: 20px;
}
.channel .panel-menu {
  padding: 2px 0 7px 12px;
}
.channel h2 {
  margin: 0;
  padding-left: 5px;
  font: bold 14px/21px var(--bold-font);
  white-space: nowrap;
}
.channel .shape {
  margin: 20px 0 18px;
  padding-left: 12px;
}
.attrs {
  display: grid;
  grid-template-columns: 1fr 92px;
  gap: 1px 7px;
  text-align: right;
}
.attrs label {
  line-height: 19px;
}
.attrs input {
  height: 19px;
  width: 92px;
  padding: 0 10px;
  background: var(--dark);
}
.dark-pane {
  height: 421px;
  background: var(--dark);
  flex: none;
}
.channel > .dots {
  margin: 6px 0 11px;
}
.dark-pane.grow {
  flex: 1;
  height: auto;
}
.layer-tabs {
  display: flex;
  background: var(--mid);
  color: #999;
  height: 22px;
}
.layer-tabs a {
  padding: 2px 14px 0;
}
.layer-tabs .active {
  background: var(--bg);
  color: #eee;
  padding-left: 20px;
}
.channel .layer-menu {
  padding: 3px 0 9px 14px;
}
.layer-icons {
  display: flex;
  justify-content: flex-end;
  gap: 10px;
  height: 26px;
  padding: 2px 6px;
}
.layer-icons svg {
  width: 20px;
  height: 16px;
}
.channel .hscroll {
  margin: 0 0 8px 4px;
}
.thumb.part {
  flex: 0 1 202px !important;
}
.side-tabs {
  width: 26px;
  background: var(--mid);
  color: #999;
  display: flex;
  flex-direction: column;
}
.side-tabs a {
  writing-mode: vertical-rl;
  text-orientation: sideways;
  padding: 13px 3px;
  line-height: 20px;
  border-bottom: 2px solid #393939;
}
.side-tabs .active {
  background: var(--bg);
  color: #eee;
}

/* time slider */
.timeline, .range, .command {
  display: flex;
  flex: none;
  border-top: 2px solid #424242;
}
.timeline {
  height: 54px;
  align-items: center;
  padding: 0 12px 3px 0;
}
.track {
  flex: 1;
  height: 42px;
  background: var(--dark);
  display: flex;
  overflow: hidden;
}
.current {
  width: 16px;
  margin-left: 10px;
  padding: 17px 0 0 3px;
  background: #5d5d5d;
  color: #fff;
  flex: none;
}
.ticks {
  flex: 1;
  min-width: 0;
  display: flex;
  color: #858585;
}
.ticks span {
  flex: 1 1 0;
  min-width: 0;
  padding-left: 3px;
  line-height: 18px;
  background: linear-gradient(#999, #999) 0 20px / 2px 17px no-repeat;
}
.time-field {
  width: 111px;
  height: 24px;
  margin: 0 10px 0 9px;
  padding: 0 6px;
  background: var(--dark);
}
.play {
  display: flex;
  gap: 5px;
  padding-bottom: 4px;
}
.play button, .play svg {
  width: 24px;
  height: 24px;
}
.flip {
  transform: scaleX(-1);
}
.range {
  height: 43px;
  align-items: center;
  padding-bottom: 4px;
}
.num {
  width: 110px;
  height: 30px;
  padding: 0 6px;
  margin-right: 10px;
  background: var(--dark);
  flex: none;
}
.range-track {
  flex: 1;
  height: 30px;
  margin-right: 10px;
  padding: 2px 0 0 34px;
  background: var(--mid);
}
.range-bar {
  width: 62%;
  height: 25px;
  padding: 0 6px;
  border-radius: 3px;
  background: var(--btn);
  display: flex;
  align-items: center;
  gap: 6px;
}
.range-bar i {
  width: 16px;
  height: 16px;
  border-radius: 3px;
  background: #999;
}
.range-bar .end {
  margin-left: auto;
}
.range-tools, .range-icons {
  display: flex;
  align-items: center;
}
.range-tools {
  margin-left: -10px;
}
.bm {
  width: 24px;
  height: 26px;
  margin: 0 8px;
}
.sep.thin {
  width: 16px;
  clip-path: polygon(7px 0, 8px 0, 10px 8px, 10px 20px, 8px 28px, 7px 28px, 6px 20px, 6px 8px);
}
.range-tools .drop {
  margin-left: 6px;
}
.range-tools .flat-field {
  width: 127px;
}
.fps {
  width: 123px;
  height: 26px;
}
.range-icons {
  gap: 14px;
  padding: 0 13px 0 15px;
}
.range-icons svg {
  width: 24px;
  height: 24px;
}
.range-icons .sep {
  margin: 0 -8px;
}
.command {
  height: 40px;
  align-items: center;
}
.help-line {
  width: 1048px;
  align-self: stretch;
  display: flex;
  align-items: center;
}
.help-mark {
  width: 18px;
  height: 18px;
  margin-left: 2px;
  border: 2px solid #aaa;
  border-radius: 50%;
  font-size: 12px;
  line-height: 14px;
  text-align: center;
}
.command label {
  padding: 0 14px 0 9px;
}
#mel {
  width: 441px;
  height: 29px;
  background: var(--dark);
}
.colon {
  width: 12px;
  height: 14px;
  background: radial-gradient(circle, #999 1px, transparent 2px) center / 12px 7px;
}
.result {
  flex: 1;
  height: 27px;
  background: var(--dark);
}
.command button {
  width: 24px;
  height: 24px;
  margin: 0 12px 0 8px;
}

/* export dialog, floats over the main window */
.dialog {
  position: absolute;
  left: 551px;
  right: 324px;
  top: 219px;
  bottom: 180px;
  background: var(--bg);
  box-shadow: 0 2px 8px rgba(0, 0, 0, 0.6);
  display: flex;
  flex-direction: column;
}
.dlg-title {
  height: 37px;
  background: #fff;
  color: #111;
  display: flex;
  align-items: center;
  gap: 6px;
  padding: 0 14px 0 10px;
  flex: none;
}
.dlg-title button {
  margin-left: auto;
}
.dlg-body {
  flex: 1;
  display: flex;
  flex-direction: column;
  min-height: 0;
  padding: 12px 10px 11px 12px;
}
.look-row {
  display: flex;
  align-items: center;
  height: 28px;
  flex: none;
  padding-right: 3px;
}
.look-row .lbl {
  width: 71px;
}
.path {
  flex: 1;
  height: 27px;
  background: var(--dark);
  display: flex;
  align-items: center;
  gap: 7px;
  padding-left: 7px;
}
.path svg {
  width: 14px;
  height: 18px;
}
.path button {
  margin-left: auto;
  width: 15px;
  height: 27px;
  background: var(--btn);
  display: flex;
  align-items: center;
  justify-content: center;
}
.path .tri {
  width: 8px;
  height: 6px;
}
.nav-icons {
  display: flex;
  gap: 12px;
  padding-left: 11px;
}
.nav-icons svg {
  width: 20px;
  height: 20px;
}
.dlg-main {
  flex: 1;
  min-height: 0;
  display: flex;
  padding-top: 7px;
}
.places {
  width: 193px;
  display: flex;
  flex-direction: column;
}
.plist {
  background: var(--dark);
  padding: 2px 0 0 4px;
}
.plist li {
  height: 22px;
  display: flex;
  align-items: center;
  gap: 3px;
}
.plist svg {
  width: 10px;
  height: 11px;
}
.marks {
  height: 229px;
  margin: 5px 0 5px;
}
.places .dots {
  width: 66px;
  margin-bottom: 4px;
}
.places select {
  height: 28px;
  margin: 5px 0 8px;
  flex: none;
  border-radius: 0;
}
.dirs {
  flex: 1;
}
.btn {
  height: 31px;
  background: #5d5d5d;
  color: #eee;
}
.btn:disabled {
  background: #505050;
  color: #858585;
}
.btn.short {
  height: 28px;
}
.places .btn {
  margin-top: 10px;
}
.vdots {
  width: 2px;
  height: 286px;
  align-self: center;
  margin: 0 5px;
  background: repeating-linear-gradient(#999 0 2px, transparent 2px 6px);
}
.files {
  flex: 1;
  min-width: 0;
  display: flex;
  flex-direction: column;
  background: var(--dark);
  border: 1px solid #2c2c2c;
}
.files table {
  width: 100%;
  table-layout: fixed;
  border-collapse: collapse;
}
.c-size { width: 159px; }
.c-type { width: 63px; }
.c-date { width: 214px; }
.files th {
  height: 30px;
  background: #5f5f5f;
  color: #eee;
  font-weight: normal;
  text-align: left;
  padding: 0 4px;
  border-right: 1px solid #3a3a3a;
}
.files th.first {
  padding-left: 26px;
}
.sort {
  float: right;
  width: 9px;
  height: 8px;
  margin: 3px 8px 0 0;
  background: #767676;
  clip-path: polygon(0 0, 100% 0, 50% 100%);
}
.files td {
  height: 22px;
  padding: 0 1px;
  white-space: nowrap;
}
.files td.first {
  display: flex;
  align-items: center;
  gap: 7px;
  padding-left: 3px;
}
.files td svg {
  width: 13px;
  height: 17px;
}
.files .hscroll {
  margin-top: auto;
}
.files .hscroll .thumb {
  flex: 0 1 881px;
}
.options {
  width: 366px;
  display: flex;
  flex-direction: column;
  padding-left: 10px;
}
.opt-box {
  flex: 1;
  margin: 11px 0 14px 3px;
  padding: 10px 12px 0 11px;
  display: flex;
  flex-direction: column;
  border-left: 1px solid #515151;
}
.section {
  height: 27px;
  background: #606060;
  display: flex;
  align-items: center;
  flex: none;
  margin-bottom: 9px;
}
.section .tri {
  margin: 0 18px 0 11px;
  background: #fff;
}
.section .tri.right {
  margin: 0 20px 0 13px;
}
.opt-group {
  display: flex;
  flex-direction: column;
  padding: 0 0 15px 188px;
}
.chk {
  display: flex;
  align-items: center;
  gap: 6px;
  height: 27px;
}
.chk.sub {
  padding-left: 44px;
  height: 26px;
}
.chk input {
  appearance: none;
  width: 17px;
  height: 17px;
  background: #2c2c2c url("data:image/svg+xml,%3Csvg xmlns='http://www.w3.org/2000/svg' width='17' height='17'%3E%3Cpath d='M4 9l3 4 6-10' fill='none' stroke='%23eee' stroke-width='2'/%3E%3C/svg%3E") no-repeat center;
}
.radios {
  display: grid;
  grid-template-columns: 1fr 88px;
  row-gap: 7px;
  padding: 5px 12px 0 0;
  text-align: right;
}
.radios label {
  display: flex;
  align-items: center;
  gap: 9px;
  padding-left: 5px;
}
.radios input {
  appearance: none;
  width: 12px;
  height: 12px;
  border-radius: 50%;
  background: #d0d0d0;
}
.opt-box .hscroll {
  margin: auto 0 0 -14px;
}
.opt-box .hscroll .thumb {
  flex: 0 0 162px;
}
.options .dots {
  align-self: flex-end;
  margin: 0 113px 2px 0;
}
.dlg-form {
  flex: none;
  display: grid;
  grid-template-columns: 71px 1fr 102px;
  gap: 9px 0;
  align-items: center;
  padding-top: 15px;
}
.dlg-form input, .dlg-form select {
  height: 28px;
  margin-right: 11px;
}
.dlg-form input {
  height: 27px;
  padding: 0 3px;
  background: var(--dark);
  border: 2px solid #5f7f8f;
  border-radius: 2px;
}
.dlg-form input:focus {
  caret-color: transparent;
  background: linear-gradient(#ddd, #ddd) 2px center / 1px 19px no-repeat var(--dark);
}
.dlg-form select {
  padding: 0 4px;
}
.resize {
  position: absolute;
  right: 0;
  bottom: 0;
  width: 12px;
  height: 12px;
  background: repeating-linear-gradient(135deg, #888 0 1px, transparent 1px 4px);
  clip-path: polygon(100% 0, 100% 100%, 0 100%);
}

/* pointer and watermark overlays */
.pointer {
  position: absolute;
  left: 627px;
  top: 489px;
  width: 12px;
  height: 18px;
}
.watermark {
  position: absolute;
  left: 12px;
  bottom: 12px;
  display: flex;
  align-items: center;
  gap: 15px;
  color: rgba(190, 190, 190, 0.55);
  font: bold 49px/52px var(--bold-font);
}
.watermark svg {
  width: 52px;
  height: 52px;
}
```
